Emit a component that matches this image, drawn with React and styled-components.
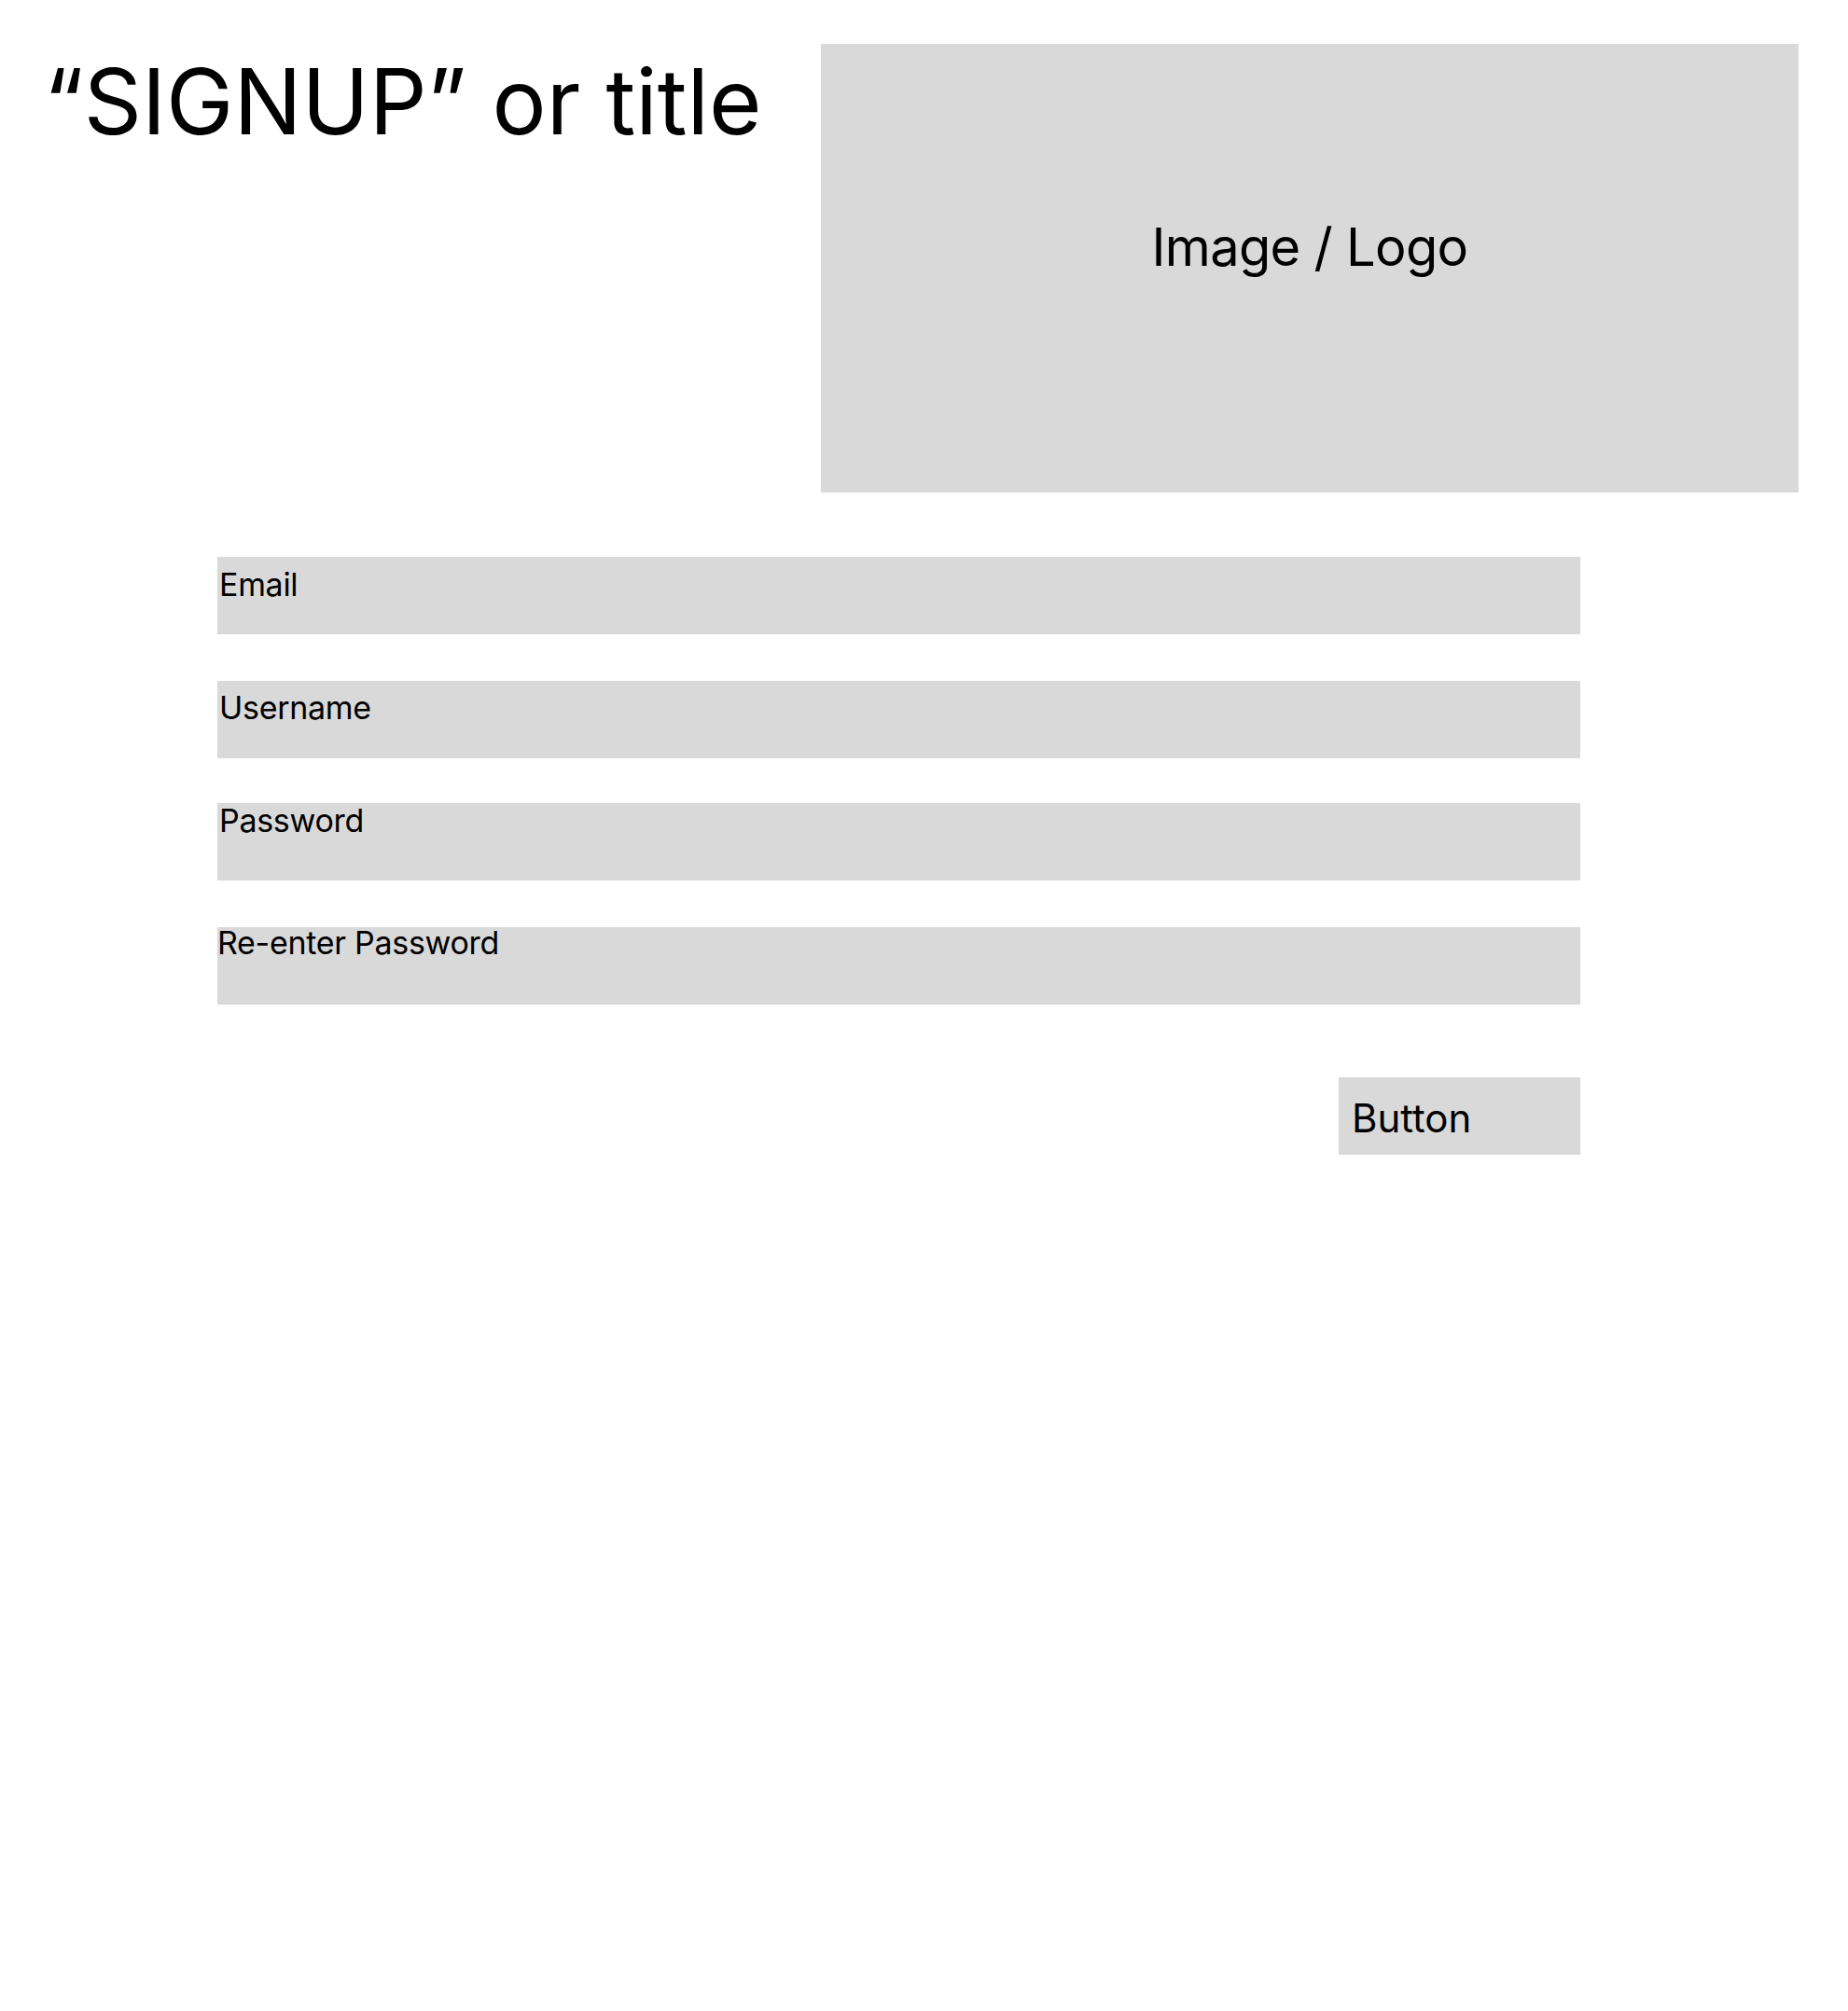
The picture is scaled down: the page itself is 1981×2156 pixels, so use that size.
import React from 'react';
import styled, {createGlobalStyle} from "styled-components";

const GlobalStyle = createGlobalStyle`
    html, body {
        margin: 0;
        padding: 0;
        background: #ffffff;
        font-family: Inter, "Noto Sans", sans-serif;
        color: #000000;
    }
`;

// top/left: where the label sits inside its box, gap: space under the box
const fields = [
    {label: 'Email', top: 13, left: 2, gap: 50},
    {label: 'Username', top: 12, left: 2, gap: 48},
    {label: 'Password', top: 2, left: 2, gap: 50},
    {label: 'Re-enter Password', top: 0, left: 0, gap: 78},
];

export default function App() {
    return (
        <Page>
            <GlobalStyle/>
            <Header>
                <Title>“SIGNUP” or title</Title>
                <LogoBox>Image / Logo</LogoBox>
            </Header>
            <Form>
                {fields.map((f) => (
                    <Field key={f.label} $gap={f.gap}>
                        <Label $top={f.top} $left={f.left}>{f.label}</Label>
                    </Field>
                ))}
                <ButtonRow>
                    <Button type="button">Button</Button>
                </ButtonRow>
            </Form>
        </Page>
    );
}

const Page = styled.div`
    width: 1981px;
    min-height: 2156px;
    box-sizing: border-box;
    padding-top: 47px;
`;

const Header = styled.div`
    display: flex;
    justify-content: space-between;
    align-items: flex-start;
    padding-left: 47px;
    padding-right: 53px;
`;

const Title = styled.h1`
    margin: 13px 0 0;
    font-size: 97px;
    font-weight: 400;
    line-height: 1;
    letter-spacing: 0;
    white-space: nowrap;
`;

const LogoBox = styled.div`
    width: 1048px;
    height: 481px;
    box-sizing: border-box;
    background: #d9d9d9;
    padding-top: 190px;
    text-align: center;
    font-size: 56px;
    letter-spacing: -0.7px;
    line-height: 1;
`;

const Form = styled.div`
    display: flex;
    flex-direction: column;
    margin-top: 69px;
    margin-left: 233px;
    width: 1461px;
`;

const Field = styled.div`
    height: 83px;
    margin-bottom: ${(p) => p.$gap}px;
    background: #d9d9d9;
`;

const Label = styled.div`
    padding-top: ${(p) => p.$top}px;
    padding-left: ${(p) => p.$left}px;
    font-size: 34px;
    letter-spacing: -0.3px;
    line-height: 1;
`;

const ButtonRow = styled.div`
    display: flex;
    justify-content: flex-end;
`;

const Button = styled.button`
    width: 259px;
    height: 83px;
    box-sizing: border-box;
    border: none;
    border-radius: 0;
    background: #d9d9d9;
    padding: 23px 0 0 14px;
    display: flex;
    align-items: flex-start;
    font-family: Inter, "Noto Sans", sans-serif;
    font-size: 42px;
    line-height: 1;
    color: #000000;
`;
